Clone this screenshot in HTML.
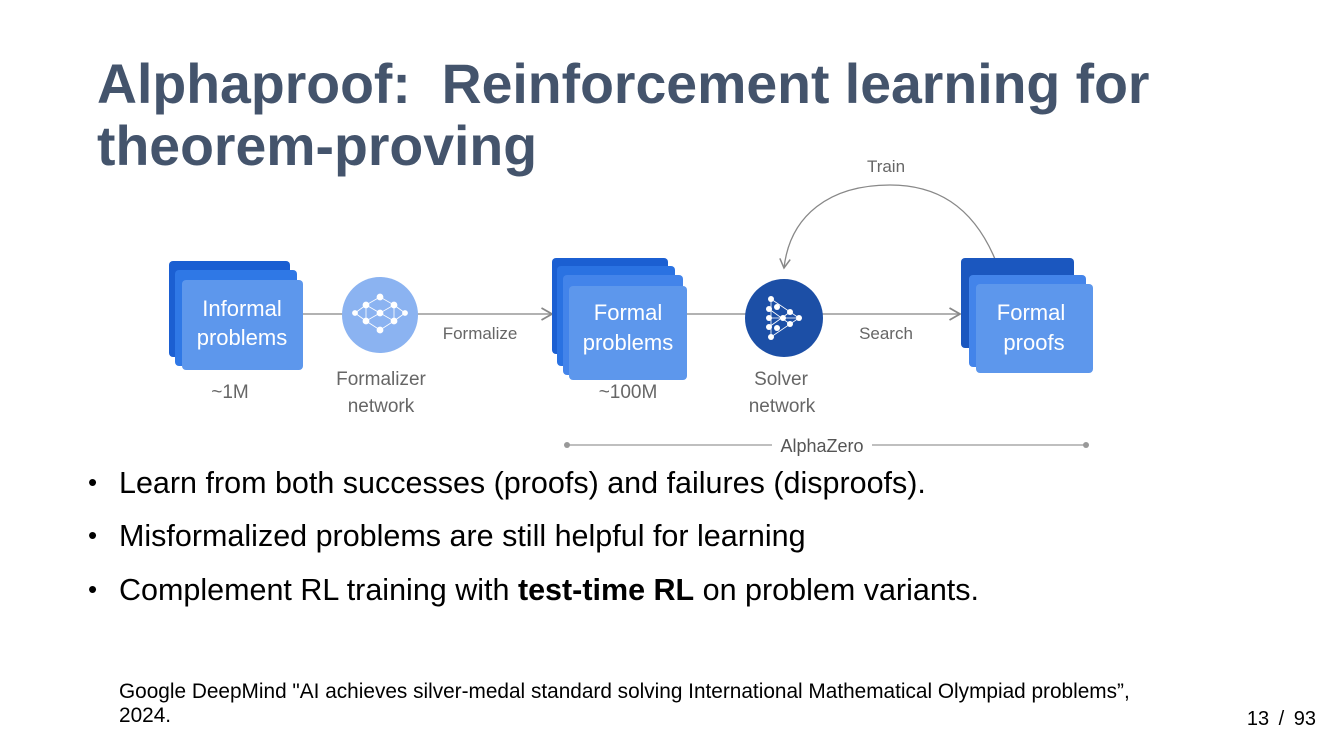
<!DOCTYPE html>
<html><head><meta charset="utf-8"><style>
html,body{margin:0;padding:0;background:#fff;}
body{width:1334px;height:750px;position:relative;overflow:hidden;font-family:"Liberation Sans",Arial,sans-serif;}
.t{position:absolute;left:97px;top:53px;font-weight:bold;font-size:55.4px;line-height:62px;color:#44546c;white-space:nowrap;}
.b{position:absolute;left:88px;font-size:30.5px;color:#000;white-space:nowrap;}
.b span.d{display:inline-block;width:31px;font-size:26px;vertical-align:2px;}
.f{position:absolute;left:119px;top:680px;font-size:20.8px;line-height:24px;color:#000;white-space:nowrap;}
.p{position:absolute;right:18px;top:708px;font-size:20px;color:#000;word-spacing:4px;}
svg{position:absolute;left:0;top:0;}
</style></head><body>
<svg width="1334" height="750" font-family="'Liberation Sans',Arial,sans-serif">
<defs><marker id="ar" markerWidth="10" markerHeight="10" refX="8" refY="5" orient="auto"><path d="M1,1 L8,5 L1,9" fill="none" stroke="#888" stroke-width="1.2"/></marker></defs>
<line x1="303" y1="314" x2="552" y2="314" stroke="#999" stroke-width="1.5" marker-end="url(#ar)"/>
<line x1="687" y1="314" x2="960" y2="314" stroke="#999" stroke-width="1.5" marker-end="url(#ar)"/>
<path d="M1000,272 C975,200 930,185 890,185 C830,185 790,215 784,268" fill="none" stroke="#888" stroke-width="1.3" marker-end="url(#ar)"/>
<line x1="566" y1="445" x2="772" y2="445" stroke="#999" stroke-width="1.3"/>
<line x1="872" y1="445" x2="1086" y2="445" stroke="#999" stroke-width="1.3"/>
<circle cx="567" cy="445" r="3" fill="#999"/><circle cx="1086" cy="445" r="3" fill="#999"/>
<rect x="169" y="261" width="121" height="96" rx="4" fill="#1b5fd2"/>
<rect x="175" y="270" width="122" height="96" rx="4" fill="#2f78e6"/>
<rect x="182" y="280" width="121" height="90" rx="4" fill="#5d97ec"/>
<text x="242" y="316" fill="#fff" font-size="22" text-anchor="middle">Informal</text>
<text x="242" y="345" fill="#fff" font-size="22" text-anchor="middle">problems</text>
<circle cx="380" cy="315" r="38" fill="#8bb3f1"/>
<g fill="#fff" stroke="#fff" stroke-width="0.8">
<circle cx="380" cy="297" r="3"/><circle cx="366" cy="305" r="3"/><circle cx="394" cy="305" r="3"/><circle cx="380" cy="313" r="3"/><circle cx="366" cy="321" r="3"/><circle cx="394" cy="321" r="3"/><circle cx="380" cy="330" r="3"/><circle cx="355" cy="313" r="2.5"/><circle cx="405" cy="313" r="2.5"/>
<path d="M380,297 L366,305 L380,313 L394,305 Z M366,305 L366,321 M394,305 L394,321 M366,321 L380,330 L394,321 L380,313 Z M355,313 L366,305 M355,313 L366,321 M405,313 L394,305 M405,313 L394,321" fill="none" stroke-width="0.8"/>
</g>
<text x="480" y="339" fill="#666" font-size="17" text-anchor="middle">Formalize</text>
<text x="381" y="385" fill="#666" font-size="19" text-anchor="middle">Formalizer</text>
<text x="381" y="412" fill="#666" font-size="19" text-anchor="middle">network</text>
<text x="230" y="398" fill="#666" font-size="19" text-anchor="middle">~1M</text>
<rect x="552" y="258" width="116" height="96" rx="4" fill="#1b5fd2"/>
<rect x="557" y="266" width="118" height="100" rx="4" fill="#2a72e2"/>
<rect x="563" y="275" width="120" height="100" rx="4" fill="#4384ea"/>
<rect x="569" y="286" width="118" height="94" rx="4" fill="#5d97ec"/>
<text x="628" y="320" fill="#fff" font-size="22" text-anchor="middle">Formal</text>
<text x="628" y="350" fill="#fff" font-size="22" text-anchor="middle">problems</text>
<text x="628" y="398" fill="#666" font-size="19" text-anchor="middle">~100M</text>
<circle cx="784" cy="318" r="39" fill="#1c4fa6"/>
<g fill="#fff">
<circle cx="771" cy="299" r="3"/><circle cx="769" cy="309" r="3"/><circle cx="777" cy="307" r="3"/><circle cx="769" cy="318" r="3"/><circle cx="783" cy="318" r="3"/><circle cx="777" cy="328" r="3"/><circle cx="769" cy="327" r="3"/><circle cx="790" cy="312" r="3"/><circle cx="790" cy="324" r="3"/><circle cx="799" cy="318" r="3"/><circle cx="771" cy="337" r="3"/>
</g>
<path d="M771,299 L799,318 L771,337 Z M769,309 L790,324 M769,327 L790,312 M769,318 L799,318" fill="none" stroke="#fff" stroke-width="0.8"/>
<text x="781" y="385" fill="#666" font-size="19" text-anchor="middle">Solver</text>
<text x="782" y="412" fill="#666" font-size="19" text-anchor="middle">network</text>
<text x="886" y="339" fill="#666" font-size="17" text-anchor="middle">Search</text>
<text x="886" y="172" fill="#666" font-size="17" text-anchor="middle">Train</text>
<rect x="961" y="258" width="113" height="90" rx="4" fill="#1b57bf"/>
<rect x="969" y="275" width="117" height="92" rx="4" fill="#4384ea"/>
<rect x="976" y="284" width="117" height="89" rx="4" fill="#5d97ec"/>
<text x="1031" y="320" fill="#fff" font-size="22" text-anchor="middle">Formal</text>
<text x="1034" y="350" fill="#fff" font-size="22" text-anchor="middle">proofs</text>
<text x="822" y="452" fill="#555" font-size="18" text-anchor="middle">AlphaZero</text>
</svg>
<div class="t">Alphaproof:&nbsp; Reinforcement learning for<br>theorem-proving</div>
<div class="b" style="top:466px"><span class="d">•</span>Learn from both successes (proofs) and failures (disproofs).</div>
<div class="b" style="top:519px"><span class="d">•</span>Misformalized problems are still helpful for learning</div>
<div class="b" style="top:573px"><span class="d">•</span>Complement RL training with <b>test-time RL</b> on problem variants.</div>
<div class="f">Google DeepMind "AI achieves silver-medal standard solving International Mathematical Olympiad problems”,<br>2024.</div>
<div class="p">13 / 93</div>
</body></html>
